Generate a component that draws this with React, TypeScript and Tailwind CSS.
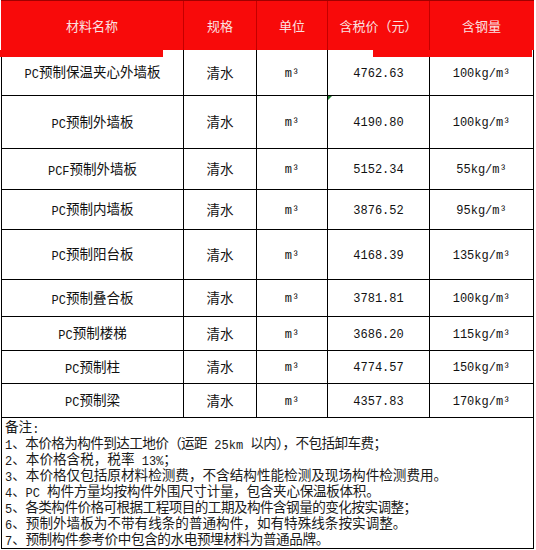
import React from "react";

const rows: { name: string; price: string; steel: string; h: string }[] = [
  { name: "PC预制保温夹心外墙板", price: "4762.63", steel: "100kg/m³", h: "h-[46px]" },
  { name: "PC预制外墙板", price: "4190.80", steel: "100kg/m³", h: "h-[53px]" },
  { name: "PCF预制外墙板", price: "5152.34", steel: "55kg/m³", h: "h-[41px]" },
  { name: "PC预制内墙板", price: "3876.52", steel: "95kg/m³", h: "h-[40px]" },
  { name: "PC预制阳台板", price: "4168.39", steel: "135kg/m³", h: "h-[50px]" },
  { name: "PC预制叠合板", price: "3781.81", steel: "100kg/m³", h: "h-[37px]" },
  { name: "PC预制楼梯", price: "3686.20", steel: "115kg/m³", h: "h-[34px]" },
  { name: "PC预制柱", price: "4774.57", steel: "150kg/m³", h: "h-[33px]" },
  { name: "PC预制梁", price: "4357.83", steel: "170kg/m³", h: "h-[34px]" },
];

const notes: { t: string; c: string }[] = [
  { t: "备注:", c: "" },
  { t: "1、本价格为构件到达工地价（运距 25km 以内），不包括卸车费；", c: "tracking-[-0.6px]" },
  { t: "2、本价格含税，税率 13%；", c: "" },
  { t: "3、本价格仅包括原材料检测费，不含结构性能检测及现场构件检测费用。", c: "" },
  { t: "4、PC 构件方量均按构件外围尺寸计量，包含夹心保温板体积。", c: "tracking-[-0.3px]" },
  { t: "5、各类构件价格可根据工程项目的工期及构件含钢量的变化按实调整；", c: "tracking-[-0.55px]" },
  { t: "6、预制外墙板为不带有线条的普通构件，如有特殊线条按实调整。", c: "" },
  { t: "7、预制构件参考价中包含的水电预埋材料为普通品牌。", c: "tracking-[-0.4px]" },
];

function T({ s }: { s: string }) {
  const parts = s.split(/([\x20-\x7e³]+)/);
  return (
    <>
      {parts.map((p, i) =>
        /^[\x20-\x7e³]+$/.test(p) ? (
          <span
            key={i}
            className="relative top-[1px] font-['Liberation_Mono',monospace] text-[12px] tracking-normal whitespace-pre"
          >
            {p}
          </span>
        ) : (
          <span key={i}>{p}</span>
        )
      )}
    </>
  );
}

const headers = ["材料名称", "规格", "单位", "含税价（元）", "含钢量"];

export default function App() {
  return (
    <div className="relative w-[536px] h-[550px] bg-white font-['Noto_Sans_CJK_SC',sans-serif] text-[#111]">
      <div className="ml-[1px] w-[533px]">
        {/* header */}
        <div className="grid grid-cols-[183px_73px_71px_102px_103px] h-[50px] bg-[#f80a0a] border-t border-t-[#a00000]">
          {headers.map((h, i) => (
            <div
              key={i}
              className={`flex items-center justify-center text-[13px] leading-none text-[#fbe0e0] pb-[1px] ${
                i < 4 ? "border-r border-r-[#c40000]" : ""
              }`}
            >
              {h}
            </div>
          ))}
        </div>
        {/* body */}
        <div className="border-l border-r border-black">
          {rows.map((r, i) => (
            <div
              key={i}
              className={`grid grid-cols-[182px_73px_71px_102px_103px] border-b border-black ${r.h}`}
            >
              <div className="flex items-center justify-center border-r border-black text-[13.5px] leading-none">
                <span>
                  <T s={r.name} />
                </span>
              </div>
              <div className="flex items-center justify-center border-r border-black text-[13.5px] leading-none">
                清水
              </div>
              <div className="flex items-center justify-center border-r border-black leading-none">
                <T s="m³" />
              </div>
              <div className="relative flex items-center justify-center border-r border-black leading-none">
                {i === 1 && (
                  <div className="absolute top-0 left-0 w-0 h-0 border-t-[4px] border-r-[4px] border-t-[#1a7a2a] border-r-transparent" />
                )}
                <T s={r.price} />
              </div>
              <div className="flex items-center justify-center leading-none">
                <T s={r.steel} />
              </div>
            </div>
          ))}
          {/* notes */}
          <div className="h-[131px] border-b border-black pl-[3px] text-[13.6px] leading-[16px] text-[#1a1a1a]">
            {notes.map((n, i) => (
              <div key={i} className={`h-[16px] whitespace-nowrap ${n.c}`}>
                <T s={n.t} />
              </div>
            ))}
          </div>
        </div>
      </div>
      {/* header color bleed overlays */}
      <div className="absolute top-[50px] left-0 w-[163px] h-[7px] bg-[#f80a0a]" />
      <div className="absolute top-[50px] left-[373px] w-[159px] h-[7px] bg-[#f80a0a]" />
    </div>
  );
}
